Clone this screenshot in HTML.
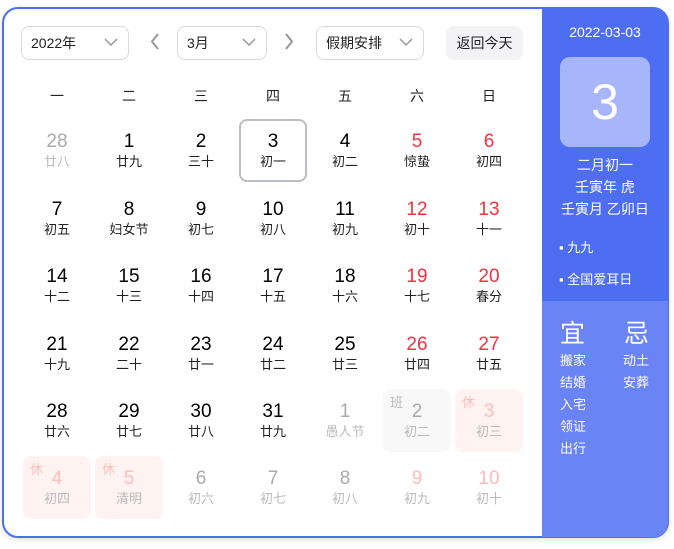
<!DOCTYPE html><html><head><meta charset="utf-8"><style>
*{margin:0;padding:0;box-sizing:border-box}
body{width:674px;height:549px;background:#fff;font-family:"Liberation Sans","Noto Sans CJK SC",sans-serif;position:relative;overflow:hidden}
.box{position:absolute;left:2px;top:7px;width:667px;height:531px;border:2px solid #4e6ef2;border-radius:16px;overflow:hidden;box-shadow:0 2px 6px rgba(0,0,0,.12)}
.sel{position:absolute;height:34px;top:26px;border:1px solid #d7d9e0;border-radius:8px;font-size:14px;color:#222;padding-left:9px;line-height:32px}
.sel svg{position:absolute;right:10px;top:11px}
.arr{position:absolute;top:33px}
.today{position:absolute;left:446px;top:26px;width:77px;height:34px;background:#f3f3f5;border-radius:8px;font-size:14px;line-height:34px;text-align:center;color:#222}
.wk{position:absolute;top:86px;width:68px;text-align:center;font-size:14px;color:#222}
.c{position:absolute;width:68px;height:63px;text-align:center;border-radius:8px}
.c b{display:block;font-weight:normal;font-size:19px;line-height:20px;margin-top:13px;color:#000}
.c i{display:block;font-style:normal;font-size:13px;line-height:16px;margin-top:2px;color:#222}
.g b{color:#aaa}.g i{color:#bbb}
.r b{color:#f5313f}
.lr b{color:#fbb}.lr i{color:#bbb}
.cur{border:2px solid #bcbec6}
.hol{background:#fff3f2}.wrk{background:#f8f8f8}
.tag{position:absolute;left:7px;top:3px;font-size:13px}
.right{position:absolute;left:542px;top:9px;width:126px;height:528px;background:#6a83f5}
.rt{position:absolute;left:0;top:0;width:126px;height:292px;background:#4e6ef2;color:#fff;text-align:center}
</style></head><body>
<div class="box"></div>
<div class="sel" style="left:21px;width:108px">2022年<svg width="14" height="9"><path d="M1 1l6 6 6-6" stroke="#999" fill="none" stroke-width="1.5"/></svg></div>
<svg class="arr" style="left:150px" width="10" height="17"><path d="M8 1L2 8.5 8 16" stroke="#999" fill="none" stroke-width="2"/></svg>
<div class="sel" style="left:177px;width:90px">3月<svg width="14" height="9"><path d="M1 1l6 6 6-6" stroke="#999" fill="none" stroke-width="1.5"/></svg></div>
<svg class="arr" style="left:284px" width="10" height="17"><path d="M2 1l6 7.5L2 16" stroke="#999" fill="none" stroke-width="2"/></svg>
<div class="sel" style="left:316px;width:108px">假期安排<svg width="14" height="9"><path d="M1 1l6 6 6-6" stroke="#999" fill="none" stroke-width="1.5"/></svg></div>
<div class="today">返回今天</div>
<div class="wk" style="left:23px">一</div><div class="wk" style="left:95px">二</div><div class="wk" style="left:167px">三</div><div class="wk" style="left:239px">四</div><div class="wk" style="left:311px">五</div><div class="wk" style="left:383px">六</div><div class="wk" style="left:455px">日</div>

<div class="c g" style="left:23px;top:119px"><b>28</b><i>廿八</i></div>
<div class="c" style="left:95px;top:119px"><b>1</b><i>廿九</i></div>
<div class="c" style="left:167px;top:119px"><b>2</b><i>三十</i></div>
<div class="c cur" style="left:239px;top:119px"><b style="margin-top:11px">3</b><i>初一</i></div>
<div class="c" style="left:311px;top:119px"><b>4</b><i>初二</i></div>
<div class="c r" style="left:383px;top:119px"><b>5</b><i>惊蛰</i></div>
<div class="c r" style="left:455px;top:119px"><b>6</b><i>初四</i></div>

<div class="c" style="left:23px;top:187px"><b>7</b><i>初五</i></div>
<div class="c" style="left:95px;top:187px"><b>8</b><i>妇女节</i></div>
<div class="c" style="left:167px;top:187px"><b>9</b><i>初七</i></div>
<div class="c" style="left:239px;top:187px"><b>10</b><i>初八</i></div>
<div class="c" style="left:311px;top:187px"><b>11</b><i>初九</i></div>
<div class="c r" style="left:383px;top:187px"><b>12</b><i>初十</i></div>
<div class="c r" style="left:455px;top:187px"><b>13</b><i>十一</i></div>

<div class="c" style="left:23px;top:254px"><b>14</b><i>十二</i></div>
<div class="c" style="left:95px;top:254px"><b>15</b><i>十三</i></div>
<div class="c" style="left:167px;top:254px"><b>16</b><i>十四</i></div>
<div class="c" style="left:239px;top:254px"><b>17</b><i>十五</i></div>
<div class="c" style="left:311px;top:254px"><b>18</b><i>十六</i></div>
<div class="c r" style="left:383px;top:254px"><b>19</b><i>十七</i></div>
<div class="c r" style="left:455px;top:254px"><b>20</b><i>春分</i></div>

<div class="c" style="left:23px;top:322px"><b>21</b><i>十九</i></div>
<div class="c" style="left:95px;top:322px"><b>22</b><i>二十</i></div>
<div class="c" style="left:167px;top:322px"><b>23</b><i>廿一</i></div>
<div class="c" style="left:239px;top:322px"><b>24</b><i>廿二</i></div>
<div class="c" style="left:311px;top:322px"><b>25</b><i>廿三</i></div>
<div class="c r" style="left:383px;top:322px"><b>26</b><i>廿四</i></div>
<div class="c r" style="left:455px;top:322px"><b>27</b><i>廿五</i></div>

<div class="c" style="left:23px;top:389px"><b>28</b><i>廿六</i></div>
<div class="c" style="left:95px;top:389px"><b>29</b><i>廿七</i></div>
<div class="c" style="left:167px;top:389px"><b>30</b><i>廿八</i></div>
<div class="c" style="left:239px;top:389px"><b>31</b><i>廿九</i></div>
<div class="c g" style="left:311px;top:389px"><b>1</b><i>愚人节</i></div>
<div class="c g wrk" style="left:383px;top:389px"><span class="tag" style="color:#bbb">班</span><b>2</b><i>初二</i></div>
<div class="c lr hol" style="left:455px;top:389px"><span class="tag" style="color:#fbb">休</span><b>3</b><i>初三</i></div>

<div class="c lr hol" style="left:23px;top:456px"><span class="tag" style="color:#fbb">休</span><b>4</b><i>初四</i></div>
<div class="c lr hol" style="left:95px;top:456px"><span class="tag" style="color:#fbb">休</span><b>5</b><i>清明</i></div>
<div class="c g" style="left:167px;top:456px"><b>6</b><i>初六</i></div>
<div class="c g" style="left:239px;top:456px"><b>7</b><i>初七</i></div>
<div class="c g" style="left:311px;top:456px"><b>8</b><i>初八</i></div>
<div class="c lr" style="left:383px;top:456px"><b>9</b><i>初九</i></div>
<div class="c lr" style="left:455px;top:456px"><b>10</b><i>初十</i></div>

<div class="right" style="border-radius:0 14px 14px 0">
<div class="rt" style="border-radius:0 14px 0 0">
<div style="position:absolute;left:0;width:126px;top:15px;font-size:14px">2022-03-03</div>
<div style="position:absolute;left:18px;top:48px;width:90px;height:90px;background:#a7b6fa;border-radius:10px;font-size:50px;line-height:90px">3</div>
<div style="position:absolute;left:0;width:126px;top:145px;font-size:14px;line-height:22px">二月初一<br>壬寅年 虎<br>壬寅月 乙卯日</div>
<div style="position:absolute;left:17px;top:228px;font-size:13px;text-align:left">▪ 九九</div>
<div style="position:absolute;left:17px;top:260px;font-size:13px;text-align:left">▪ 全国爱耳日</div>
</div>
<div style="position:absolute;left:18px;top:305px;color:#fff;font-size:25px">宜</div>
<div style="position:absolute;left:82px;top:305px;color:#fff;font-size:25px">忌</div>
<div style="position:absolute;left:18px;top:341px;color:#fff;font-size:13px;line-height:22px">搬家<br>结婚<br>入宅<br>领证<br>出行</div>
<div style="position:absolute;left:81px;top:341px;color:#fff;font-size:13px;line-height:22px">动土<br>安葬</div>
</div>
</body></html>
